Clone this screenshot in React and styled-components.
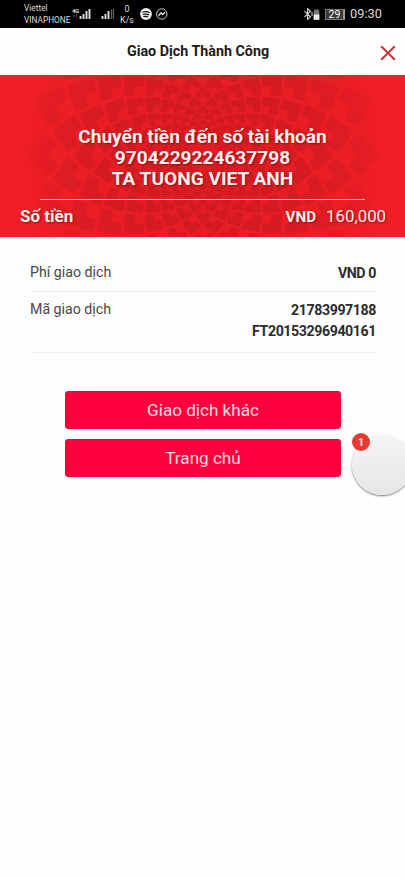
import styled, { createGlobalStyle } from 'styled-components'

export default function App() {
    return (
        <>
            <GlobalStyle />
            <Screen>
                <StatusBar>
                    <Carriers>
                        <p>Viettel</p>
                        <p>VINAPHONE</p>
                    </Carriers>
                    <StatusIcons />
                    <Speed>
                        <p>0</p>
                        <p>K/s</p>
                    </Speed>
                    <AppIcons />
                    <PowerIcons />
                    <Battery>29</Battery>
                    <Clock>09:30</Clock>
                </StatusBar>
                <Header>
                    <h1>Giao Dịch Thành Công</h1>
                    <CloseButton>
                        <svg width="16" height="16" viewBox="0 0 16 16">
                            <path d="M1.2 1.2 14.8 14.8M14.8 1.2 1.2 14.8" stroke="#c9343c" strokeWidth="2" fill="none" />
                        </svg>
                    </CloseButton>
                </Header>
                <Banner>
                    <Mandala />
                    <Receiver>
                        <p>Chuyển tiền đến số tài khoản</p>
                        <p>9704229224637798</p>
                        <p>TA TUONG VIET ANH</p>
                    </Receiver>
                    <Amount>
                        <b>Số tiền</b>
                        <Money><b>VND</b>160,000</Money>
                    </Amount>
                </Banner>
                <Details>
                    <Row $height={37}>
                        <Label>Phí giao dịch</Label>
                        <Value>VND 0</Value>
                    </Row>
                    <Row $height={61}>
                        <Label>Mã giao dịch</Label>
                        <Value>
                            <p>21783997188</p>
                            <p>FT20153296940161</p>
                        </Value>
                    </Row>
                </Details>
                <Actions>
                    <Button>Giao dịch khác</Button>
                    <Button>Trang chủ</Button>
                </Actions>
                <Bubble>
                    <Badge>1</Badge>
                </Bubble>
            </Screen>
        </>
    )
}

function StatusIcons() {
    return (
        <SignalSvg width="46" height="28" viewBox="0 0 46 28">
            <text x="1" y="12.5" fontSize="6" fontWeight="700" fill="#ddd" textLength="7">4G</text>
            <path d="M3 17v-2M5.500 17v-3" stroke="#555" strokeWidth="1" />
            <path d="M9.500 19v-3M12.500 19v-5M15.500 19v-8M18.500 19v-10" stroke="#ddd" strokeWidth="1.9" />
            <path d="M31.500 19v-3M34.500 19v-5M37.500 19v-8" stroke="#ddd" strokeWidth="1.9" />
            <path d="M40.500 19v-9.500M42.500 19v-10" stroke="#666" strokeWidth="1.200" />
        </SignalSvg>
    )
}

function AppIcons() {
    return (
        <AppSvg width="30" height="14" viewBox="0 0 30 14">
            <circle cx="7" cy="7" r="5.900" fill="#eee" />
            <path d="M3.500 5.200q3.700-1.300 7.200.5M4 7.500q3.200-1 6 .5M4.400 9.600q2.600-.7 4.800.4" stroke="#111" strokeWidth="1.200" fill="none" />
            <circle cx="22.800" cy="7" r="5.200" stroke="#ccc" strokeWidth="1" fill="none" />
            <path d="M19.600 8.700l2.500-2.800 1.500 1.700 2.500-2.200" stroke="#ddd" strokeWidth="1.400" fill="none" />
        </AppSvg>
    )
}

function PowerIcons() {
    return (
        <PowerSvg width="18" height="14" viewBox="0 0 18 14">
            <path d="M1.500 4.200l6 5.600L4.600 12.300V1.700L7.500 4.200l-6 5.600" stroke="#ddd" strokeWidth="1.100" fill="none" />
            <path d="M9 5v4" stroke="#ddd" strokeWidth="1" />
            <path d="M11.500 2.500h4v1h.8v9.300h-5.600V3.500h.8z" fill="#777" />
            <path d="M10.700 7.500h5.600v5.300h-5.600z" fill="#eee" />
        </PowerSvg>
    )
}

const PETALS = 20
const RINGS = 15

// rings of notched squares growing away from the centre
function Mandala() {
    const petals = []
    for (let ring = 0; ring < RINGS; ring++) {
        const radius = 17 * Math.pow(1.172, ring)
        const s = radius * 0.14
        for (let i = 0; i < PETALS; i++) {
            const angle = ((i + (ring % 2) / 2) * 360) / PETALS
            petals.push(
                <path
                    key={`${ring}-${i}`}
                    d="M1 0 0 1-.5.5-.1 0-.5-.5 0-1z"
                    transform={`rotate(${angle}) translate(${radius}) scale(${s})`}
                />
            )
        }
    }
    return (
        <Pattern viewBox="0 0 405 162" preserveAspectRatio="none">
            <defs>
                <radialGradient id="glow" gradientUnits="userSpaceOnUse" cx="203" cy="80" r="200">
                    <stop offset="0" stopColor="#e21c24" />
                    <stop offset=".5" stopColor="#e91d25" />
                    <stop offset="1" stopColor="#f01e27" />
                </radialGradient>
                <radialGradient id="fade" gradientUnits="userSpaceOnUse" cx="203" cy="80" r="200">
                    <stop offset="0" stopColor="#cd1a20" />
                    <stop offset=".5" stopColor="#d41b21" />
                    <stop offset=".75" stopColor="#e01c24" />
                    <stop offset=".95" stopColor="#ed1e27" />
                    <stop offset="1" stopColor="#f01e27" />
                </radialGradient>
                <mask id="petals">
                    <g transform="translate(203 80)" fill="#fff">{petals}</g>
                </mask>
            </defs>
            <rect width="405" height="162" fill="url(#glow)" />
            <rect width="405" height="162" fill="url(#fade)" mask="url(#petals)" />
        </Pattern>
    )
}

const GlobalStyle = createGlobalStyle`
    * {
        box-sizing: border-box;
    }

    body, p, h1 {
        margin: 0;
    }

    body {
        background: #fefefe;
        font-family: Roboto, 'Liberation Sans', sans-serif;
    }
`

const Screen = styled.div`
    position: relative;
    width: 405px;
    height: 878px;
    overflow: hidden;
    background: #fefefe;
`

const StatusBar = styled.div`
    display: flex;
    height: 28px;
    padding-left: 24px;
    background: #000000;
    color: #dddddd;
`

const Carriers = styled.div`
    width: 47px;
    padding-top: 3px;
    font-size: 8.3px;
    line-height: 11.5px;
    white-space: nowrap;
`

const SignalSvg = styled.svg`
    flex: none;
`

const Speed = styled.div`
    width: 20px;
    padding-top: 4px;
    font-size: 9px;
    line-height: 10.5px;
    text-align: center;
`

const AppSvg = styled.svg`
    flex: none;
    margin: 7px 0 0 2px;
`

const PowerSvg = styled.svg`
    flex: none;
    margin: 7px 0 0 134px;
`

const Battery = styled.div`
    width: 20px;
    height: 11px;
    margin: 9px 0 0 4px;
    background: #3a3a3a;
    border: 1px solid #777777;
    border-right: 2px solid #999999;
    color: #ffffff;
    font-size: 10.5px;
    line-height: 9px;
    text-align: center;
`

const Clock = styled.div`
    margin-left: 5px;
    font-size: 12.8px;
    line-height: 28px;
`

const Header = styled.div`
    display: flex;
    align-items: center;
    justify-content: flex-end;
    height: 47px;
    padding-right: 9px;

    h1 {
        flex: 1;
        padding-left: 16px;
        font-weight: 700;
        font-size: 14.3px;
        line-height: 47px;
        text-align: center;
        color: #1c1c1c;
    }
`

const CloseButton = styled.button`
    display: flex;
    margin-top: 2px;
    padding: 0;
    border: none;
    background: none;
`

const Banner = styled.div`
    position: relative;
    height: 162px;
    padding-top: 50px;
    background: #f01e27;
    border-top: 1px solid #c8202a;
    border-bottom: 1px solid #c8202a;
    color: #ffeeee;
    text-shadow: 1px 1px 2px rgba(90, 0, 0, 0.6);
`

const Pattern = styled.svg`
    position: absolute;
    top: -1px;
    left: 0;
    width: 405px;
    height: 162px;
`

const Receiver = styled.div`
    position: relative;
    width: 325px;
    height: 74px;
    margin-left: 40px;
    border-bottom: 1px solid #ffd5d5;
    font-weight: 700;
    font-size: 19.1px;
    line-height: 21px;
    text-align: center;
`

const Amount = styled.div`
    position: relative;
    display: flex;
    justify-content: space-between;
    padding: 5px 19px 0 20px;
    font-size: 17px;
    line-height: 22px;
`

const Money = styled.div`
    font-size: 16.8px;

    b {
        margin-right: 10px;
        font-size: 15.2px;
    }
`

const Details = styled.div`
    padding: 18px 29px 0 30px;
`

const Row = styled.div`
    display: flex;
    justify-content: space-between;
    height: ${props => props.$height}px;
    padding-top: 7px;
    border-bottom: 1px solid #f0f0f0;
    font-size: 14.2px;
    line-height: 21px;
`

const Label = styled.div`
    color: #484848;
`

const Value = styled.div`
    padding-top: 1px;
    font-weight: 700;
    letter-spacing: -0.42px;
    text-align: right;
    color: #2c2c2c;
`

const Actions = styled.div`
    display: flex;
    flex-direction: column;
    gap: 10px;
    padding: 38px 64px 0 65px;
`

const Button = styled.button`
    height: 38px;
    padding: 0;
    border: none;
    border-radius: 4px;
    background: #ff003c;
    box-shadow: inset 0 0 0 1px #e3093e;
    color: #ffdce4;
    font-family: inherit;
    font-size: 17.1px;
    line-height: 38px;
`

const Bubble = styled.div`
    position: absolute;
    top: 435px;
    left: 352px;
    width: 60px;
    height: 60px;
    border-radius: 50%;
    background: linear-gradient(#f5f5f5, #e6e6e6);
    box-shadow: 0 1px 2px rgba(0, 0, 0, 0.55);
`

const Badge = styled.div`
    position: absolute;
    top: -2px;
    left: 0;
    width: 18px;
    height: 18px;
    border-radius: 50%;
    background: #e63a34;
    color: #ffdddd;
    font-size: 11.5px;
    font-weight: 700;
    line-height: 18px;
    text-align: center;
`
